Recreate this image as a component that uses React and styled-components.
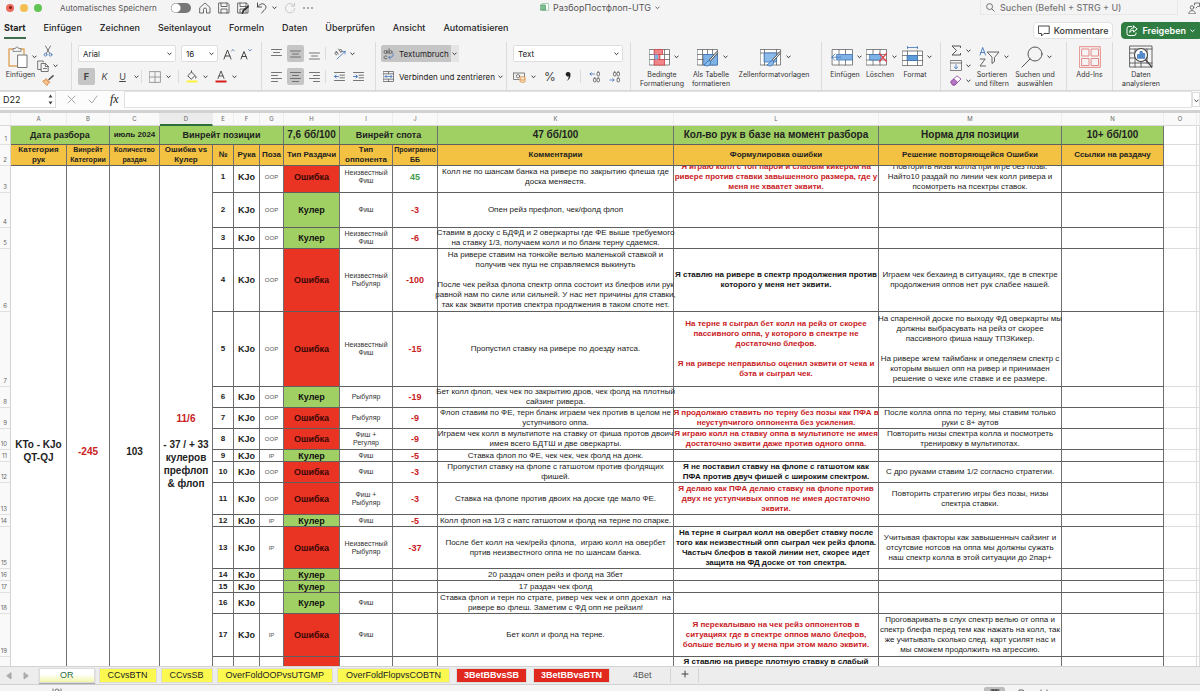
import React, { useLayoutEffect, useRef } from "react";
import styled, { createGlobalStyle, css } from "styled-components";

const GREEN = "#a0cf63";
const AMBER = "#f3c243";
const RED = "#e93323";
const INK_RED = "#c9211e";
const UI = `Inter, "Noto Sans", sans-serif`;
const CELL = `"Liberation Sans", Arial, sans-serif`;

const Global = createGlobalStyle`
  *, *::before, *::after { box-sizing: border-box; }
  html, body { margin: 0; height: 100%; background: #f5f4f5; }
  #root { height: 100%; }
  button, select, input { font: inherit; color: inherit; margin: 0; padding: 0; border: 0; background: none; }
`;

const Window = styled.div`
  display: flex;
  flex-direction: column;
  height: 100vh;
  overflow: hidden;
  font-family: ${UI};
  font-size: 8px;
  color: #222;
`;

/* ---------- title bar ---------- */
const TitleBar = styled.header`
  display: grid;
  grid-template-columns: 1fr auto 1fr;
  align-items: center;
  height: 15px;
  flex: none;
`;
const TitleSide = styled.div`
  display: flex;
  align-items: center;
  gap: ${(p) => p.$gap || 0}px;
  justify-content: ${(p) => (p.$end ? "flex-end" : "flex-start")};
`;
const Lights = styled.div`
  display: flex;
  gap: 6px;
  padding: 0 18px 0 6px;
`;
const Light = styled.span`
  width: 8px;
  height: 8px;
  border-radius: 50%;
  background: ${(p) => p.$color};
  display: grid;
  place-items: center;
  &::after {
    content: "";
    width: 3px;
    height: 3px;
    border-radius: 50%;
    background: ${(p) => p.$dot || "transparent"};
  }
`;
const AutoSave = styled.label`
  display: flex;
  align-items: center;
  gap: 14px;
  font-size: 8px;
  color: #555;
`;
const Toggle = styled.input`
  appearance: none;
  width: 20px;
  height: 10px;
  border-radius: 5px;
  background: radial-gradient(circle at 5px 5px, #fff 4px, #777 5px);
`;
const Quick = styled.div`
  display: flex;
  align-items: center;
  gap: 7px;
  padding-left: 8px;
`;
const IconButton = styled.button`
  display: flex;
  align-items: center;
  justify-content: center;
  flex: none;
  color: ${(p) => p.$color || "#4a4a4a"};
  gap: ${(p) => p.$gap || 0}px;
`;
const DocName = styled.h1`
  display: flex;
  align-items: center;
  gap: 4px;
  margin: 0;
  font-size: 9px;
  font-weight: 400;
  color: #555;
`;
const SearchBox = styled.label`
  display: flex;
  align-items: center;
  gap: 5px;
  width: 198px;
  height: 15px;
  padding-left: 5px;
  border: 1px solid #e9e8e9;
  border-top: 0;
  color: #666;
  input {
    flex: 1;
    min-width: 0;
    font-size: 9px;
    font-weight: 500;
  }
  input::placeholder { color: #777; opacity: 1; }
`;

/* ---------- ribbon tabs ---------- */
const TabBar = styled.nav`
  display: flex;
  align-items: center;
  gap: 18px;
  height: 27px;
  flex: none;
  padding-left: 4px;
`;
const RibbonTab = styled.a`
  font-size: 9px;
  line-height: 18px;
  font-weight: ${(p) => (p.$active ? 700 : 500)};
  color: #262626;
  text-decoration: none;
  border-bottom: 2px solid ${(p) => (p.$active ? "#3f6b4f" : "transparent")};
`;
const TabActions = styled.div`
  display: flex;
  gap: 8px;
  margin-left: auto;
  padding-top: 4px;
`;
const Action = styled.button`
  display: flex;
  align-items: center;
  gap: 4px;
  height: 17px;
  padding: 0 4px;
  font-size: 9px;
  font-weight: ${(p) => (p.$primary ? 600 : 500)};
  border-radius: ${(p) => (p.$primary ? "4px 0 0 4px" : "4px")};
  background: ${(p) => (p.$primary ? "#2f7d43" : "#fff")};
  color: ${(p) => (p.$primary ? "#fff" : "#333")};
  border: 1px solid ${(p) => (p.$primary ? "#2f7d43" : "#e2e2e2")};
`;

/* ---------- ribbon ---------- */
const Ribbon = styled.div`
  display: flex;
  height: 49px;
  flex: none;
  border-bottom: 1px solid #d9d8d9;
`;
const Group = styled.section`
  width: ${(p) => p.$w}px;
  flex: none;
  display: flex;
  padding: 3px 0 0 ${(p) => p.$pad || 6}px;
  border-left: ${(p) => (p.$first ? "0" : "1px solid #dddcdd")};
  gap: ${(p) => p.$gap || 0}px;
`;
const Stack = styled.div`
  display: flex;
  flex-direction: column;
  gap: ${(p) => (p.$gap === undefined ? 6 : p.$gap)}px;
`;
const Line = styled.div`
  display: flex;
  align-items: center;
  height: 17px;
  gap: ${(p) => p.$gap || 0}px;
`;
const Divider = styled.span`
  width: 1px;
  height: 13px;
  background: #dcdcdc;
`;
const SelectWrap = styled.span`
  display: flex;
  align-items: center;
  width: ${(p) => p.$w}px;
  height: 17px;
  padding-right: 3px;
  background: #fff;
  border: 1px solid #dedede;
  border-radius: 2px;
  select {
    appearance: none;
    flex: 1;
    min-width: 0;
    padding-left: 4px;
    font-size: 8px;
    outline: 0;
  }
`;
const Square = styled.button`
  width: 17px;
  height: 17px;
  display: grid;
  place-items: center;
  flex: none;
  border-radius: 2px;
  font-size: 9px;
  font-weight: ${(p) => p.$weight || 400};
  font-style: ${(p) => (p.$italic ? "italic" : "normal")};
  text-decoration: ${(p) => (p.$underline ? "underline" : "none")};
  background: ${(p) => (p.$on ? "#c6c5c6" : "transparent")};
  color: #444;
`;
const Glyph = styled.button`
  font-size: ${(p) => p.$size}px;
  line-height: 17px;
  color: #444;
`;
const WrapButton = styled.button`
  display: flex;
  align-items: center;
  gap: 5px;
  height: 17px;
  padding: 0 2px;
  font-size: 8px;
  border-radius: 2px 0 0 2px;
  background: ${(p) => (p.$on ? "#c6c5c6" : "transparent")};
`;
const ChevronSlot = styled.button`
  width: 8px;
  height: 17px;
  display: grid;
  place-items: center;
  background: ${(p) => (p.$on ? "#e6e5e6" : "transparent")};
`;
const BigButton = styled.button`
  width: ${(p) => p.$w}px;
  flex: none;
  display: flex;
  flex-direction: column;
  align-items: center;
  align-self: flex-start;
  gap: 2px;
  font-size: 7px;
  line-height: 9px;
  white-space: pre;
  color: #333;
`;
const BigIcon = styled.span`
  display: flex;
  align-items: center;
  gap: 4px;
  height: 23px;
  padding-left: ${(p) => (p.$solo ? 0 : 3)}px;
`;

/* ---------- formula bar ---------- */
const FormulaBar = styled.div`
  display: flex;
  align-items: center;
  height: 22px;
  flex: none;
  padding: 1px 0 3px;
  background: #fcfcfc;
  border-bottom: 3px solid #d3d2d3;
`;
const NameBox = styled.label`
  display: flex;
  align-items: center;
  width: 56px;
  height: 17px;
  padding: 0 2px 0 3px;
  background: #fff;
  border: solid #dcdcdc;
  border-width: 1px 1px 1px 0;
  input { flex: 1; min-width: 0; font-size: 9px; }
`;
const FormulaTools = styled.div`
  display: flex;
  align-items: center;
  gap: 12px;
  padding: 0 5px 0 11px;
`;
const Fx = styled.button`
  font: italic 12px "Liberation Serif", serif;
  color: #222;
`;
const FormulaInput = styled.input`
  flex: 1;
  min-width: 0;
  height: 17px;
  background: #fff;
  border: 1px solid #e2e2e2;
`;
const Expand = styled.button`
  width: 8px;
  height: 15px;
  background: #fff;
  border: 1px solid #ddd;
  overflow: hidden;
`;

/* ---------- sheet ---------- */
const Sheet = styled.main`
  flex: 1;
  min-height: 0;
  display: flex;
  flex-direction: column;
  background: #fff;
  overflow: hidden;
`;
const Pane = styled.div`
  flex: ${(p) => (p.$body ? "1" : "none")};
  min-height: 0;
  overflow: hidden;
`;
const Grid = styled.table`
  table-layout: fixed;
  width: 100%;
  border-collapse: separate;
  border-spacing: 0;
  font-family: ${CELL};
`;
const Row = styled.tr`
  height: ${(p) => p.$h}px;
`;
const ColHead = styled.th`
  padding: 0;
  font: 400 6px/10px ${UI};
  color: #666;
  background: ${(p) => (p.$on ? "#ebebeb" : "#f9f9fa")};
  border-right: 1px solid #ededed;
  border-bottom: ${(p) => (p.$on ? "2px solid #2c6e3c" : "1px solid #d8d8d8")};
`;
const RowHead = styled.th`
  padding: 0 3px 1px 0;
  vertical-align: bottom;
  text-align: right;
  direction: rtl;
  font: 400 6px/8px ${UI};
  color: #666;
  background: #f9f9fa;
  border-right: 1px solid #d4d4d4;
  border-bottom: 1px solid #e0e0e0;
  overflow: hidden;
`;
const kinds = {
  title: css`font-weight: 700; font-size: ${(p) => p.$size || 9}px; line-height: 12px; background: ${GREEN};`,
  head: css`font-weight: 700; font-size: ${(p) => p.$size || 8}px; line-height: 10px; background: ${AMBER};`,
  num: css`font-weight: 700; font-size: 8px; line-height: 10px;`,
  hand: css`font-weight: 700; font-size: 9px; line-height: 10px;`,
  pos: css`font-size: 6px; line-height: 8px; color: #555;`,
  type: css`font-weight: 700; font-size: 9px; line-height: 10px;`,
  opp: css`font-size: 7px; line-height: 8px; color: #333;`,
  sum: css`font-weight: 700; font-size: 9px; line-height: 10px;`,
  note: css`font-size: 8px; line-height: 10px; color: #222;`,
  error: css`font-weight: 700; font-size: 8px; line-height: 10px;`,
  merged: css`font-weight: 700; font-size: 10px; line-height: 13px; border-bottom: 0;`,
};
const Cell = styled.td`
  padding: 0;
  text-align: center;
  vertical-align: ${(p) => (p.$top ? "top" : "middle")};
  white-space: pre;
  border-right: 1px solid #6f6f6f;
  border-bottom: 1px solid #5f5f5f;
  ${(p) => kinds[p.$kind]}
  ${(p) => p.$color && `color: ${p.$color};`}
  ${(p) => p.$bg && `background: ${p.$bg};`}
`;
const Ink = styled.span`
  color: ${(p) => p.$color};
`;
const Centered = styled.div`
  display: flex;
  justify-content: center;
`;
const Blank = styled.td`
  padding: 0;
  border-right: 1px solid #dcdcdc;
  border-bottom: 1px solid #dcdcdc;
`;

/* ---------- bottom ---------- */
const SheetTabs = styled.nav`
  display: flex;
  align-items: center;
  height: 19px;
  flex: none;
  padding-left: 6px;
  background: #ededed;
  border-top: 1px solid #d2d2d2;
  border-bottom: 1px solid #d0d0d0;
`;
const TabArrows = styled.div`
  display: flex;
  gap: 11px;
  width: 33px;
`;
const SheetTab = styled.button`
  height: 15px;
  padding: 0 ${(p) => p.$pad}px;
  margin-right: 4px;
  font: 400 9px/13px ${CELL};
  color: #222;
  border: 1px solid #dcdcdc;
  background: ${(p) => p.$bg || "transparent"};
  ${(p) => p.$active && css`
    color: #2a7040;
    background: linear-gradient(#fff 40%, #f2f7a8);
    box-shadow: 0 1px 1px #aaa;
  `}
  ${(p) => p.$bold && css`
    font-weight: 700;
    color: #fff;
    margin-left: 2px;
  `}
  ${(p) => p.$plain && css`color: #555; border-color: transparent #d4d4d4 transparent transparent; margin: 0;`}
`;
const StatusBar = styled.footer`
  display: flex;
  justify-content: space-between;
  height: 6px;
  flex: none;
  padding: 2px 0 0 52px;
  background: #f4f4f4;
  overflow: hidden;
`;
const ViewButtons = styled.div`
  display: flex;
  gap: 12px;
  padding-right: 151px;
`;
const ViewButton = styled.button`
  display: grid;
  place-items: start center;
  width: ${(p) => (p.$on ? 21 : 10)}px;
  height: 8px;
  padding-top: 2px;
  border-radius: 2px;
  background: ${(p) => (p.$on ? "#bdbdbd" : "transparent")};
`;

/* ---------- icons ---------- */
const Svg = ({ w, h, children, sw = 1, color = "currentColor" }) => (
  <svg width={w} height={h} viewBox={`0 0 ${w} ${h}`} fill="none" stroke={color} strokeWidth={sw} strokeLinecap="round" strokeLinejoin="round" aria-hidden="true">
    {children}
  </svg>
);
const Chevron = ({ color = "#333" }) => (
  <Svg w={5} h={4} color={color}><path d="M.8 1l1.7 1.7L4.2 1" /></Svg>
);
const Drop = ({ label }) => <ChevronSlot aria-label={label}><Chevron /></ChevronSlot>;

const Home = () => <Svg w={12} h={12} sw={0.8}><path d="M1 5.500L6 1l5 4.500V11H7.500V7.500a1.500 1.500 0 0 0-3 0V11H1z" /></Svg>;
const Save = ({ pen }) => (
  <Svg w={12} h={12} sw={0.8}>
    <path d="M1 1h8.500L11 2.500V11H1zM3 1v3.500h6V1M3 11V7h6v4" />
    {pen && <path d="M5.500 11l1-2.500L11 4.500" stroke="#333" strokeWidth="2" />}
  </Svg>
);
const Undo = () => <Svg w={11} h={12}><path d="M1.500 1v4h4M1.500 5C4 1.500 7 1 9 3s.5 4-1 5.500L5.500 11" /></Svg>;
const Redo = () => <Svg w={12} h={12}><path d="M10.500 1v3h-3M10.300 4A4.700 4.700 0 1 0 10.800 6.500" /></Svg>;
const Magnifier = ({ s = 9, sw = 0.9 }) => (
  <svg width={s} height={s} viewBox="0 0 10 10" fill="none" stroke="#555" strokeWidth={sw} aria-hidden="true"><circle cx="4" cy="4" r="3.300" /><path d="M6.500 6.500L9.500 9.500" /></svg>
);
const SearchBig = () => <Svg w={22} h={22} color="#555"><circle cx="14" cy="8" r="7" /><path d="M9 13l-8 8" /></Svg>;
const Clipboard = () => (
  <Svg w={20} h={22}>
    <path d="M9 20H1V3h4M13 3h3v5" stroke="#e0a55c" strokeWidth="1.400" />
    <path d="M5 5V2.500h2.500a1.500 1.500 0 0 1 3 0H13V5z" stroke="#777" strokeWidth=".8" />
    <path d="M10 9h9v12.500h-9z" stroke="#666" fill="#fff" strokeWidth=".9" />
  </Svg>
);
const Scissors = () => (
  <Svg w={10} h={12} sw={0.8}>
    <path d="M2.500 1l4.300 7.500M7.500 1L3.200 8.500" stroke="#555" /><circle cx="2.500" cy="9.700" r="1.400" stroke="#3c74b8" /><circle cx="7.500" cy="9.700" r="1.400" stroke="#3c74b8" />
  </Svg>
);
const Copy = () => <Svg w={12} h={12} sw={0.8} color="#555"><path d="M4 9.500H.7V1h5.500v1M4.500 3.500h4l2.700 2.700V11.500H4.500zM8.300 3.500v3h3M6.500 8.500h3" /></Svg>;
const Brush = () => <Svg w={12} h={11} sw={0.9}><path d="M11 .8L7 4.500" stroke="#555" strokeWidth="1.600" /><path d="M4 3.500l4 4M1 6l3-1.500 3 3L5 10.300z" stroke="#d78532" fill="#f4c391" /></Svg>;
const FontSize = ({ up }) => (
  <Svg w={12} h={12} color="#444"><path d={up ? "M1 11l3.500-9L8 11M2.200 8h4.600" : "M1 11l3-7.500L7 11M2 8.500h4"} /><path d={up ? "M8.500 3L10 1.500 11.500 3" : "M8.500 1.500L10 3l1.500-1.500"} stroke="#3c74b8" strokeWidth=".8" /></Svg>
);
const Borders = () => <Svg w={12} h={12} sw={0.8} color="#888"><path d="M.6.6h10.800v10.800H.6zM6 .6v10.800M.6 6h10.800" /></Svg>;
const Fill = () => <Svg w={12} h={13} sw={0.9}><path d="M2 5.500L5.500 2l3.500 3.500L5.500 9zM5.500 2V.8M9.500 6c1 1.500 1 2-.1 2" stroke="#444" /><path d="M.5 11.500h11" stroke="#fbf23c" strokeWidth="2" strokeLinecap="butt" /></Svg>;
const FontColor = () => <Svg w={12} h={13} sw={0.9}><path d="M3 8.500L6 1l3 7.500M4 6h4" stroke="#444" /><path d="M.5 11.500h11" stroke="#d5211b" strokeWidth="2" strokeLinecap="butt" /></Svg>;
const lineSets = {
  top: ["M.5 1.500h10", "M2.500 4.500h6", "M.5 7.500h10"],
  middle: ["M.5 3h10", "M2.500 6h6", "M.5 9h10"],
  bottom: ["M.5 5h10", "M2.500 8h6", "M.5 11h10"],
  left: ["M.5 1.500h10", "M.5 4.500h6", "M.5 7.500h10", "M.5 10.500h6"],
  center: ["M.5 1.500h10", "M2.500 4.500h6", "M.5 7.500h10", "M2.500 10.500h6"],
  right: ["M.5 1.500h10", "M4.500 4.500h6", "M.5 7.500h10", "M4.500 10.500h6"],
};
const Lines = ({ kind }) => <Svg w={11} h={12} sw={0.9} color="#666">{lineSets[kind].map((d) => <path key={d} d={d} />)}</Svg>;
const Orient = () => <Svg w={12} h={12} sw={0.8}><path d="M3 11l8-7.500M11 3.500H8.500M11 3.500V6" stroke="#3c74b8" /><path d="M2.800 6.800a1.400 1.400 0 1 1 .9-1.900M4.200 6.200L2 3.200M4.500 1l2.300 3.300M6.800 4.300a1.400 1.400 0 1 0-1.500-1.800" stroke="#555" /></Svg>;
const Indent = ({ right }) => <Svg w={11} h={11} sw={0.9}><path d="M.5 1.500h10M6 4.200h4.500M6 6.800h4.500M.5 9.500h10" stroke="#666" /><path d={right ? "M.5 5.500h3.800M3 4l1.500 1.500L3 7" : "M4.500 5.500H.7M2.200 4L.7 5.500 2.200 7"} stroke="#3c74b8" /></Svg>;
const WrapIcon = () => <Svg w={11} h={12} sw={0.8} color="#555"><circle cx="2.500" cy="4" r="1.500" /><path d="M4 2.500v3M6 .8v4.700" /><circle cx="7.500" cy="4" r="1.500" /><path d="M4 8.200C2 7.200 1 8.500 1 9.500s1.500 2 3 1" /><path d="M10 5.500c.8 3-1 4-4 4M7.300 8L5.800 9.500 7.300 11" stroke="#3c74b8" /></Svg>;
const Merge = () => <Svg w={11} h={11} sw={0.8}><path d="M.5.500h10v10H.5zM.5 2.800h10M.5 8.200h10M5.500.500v2.300M5.500 8.200v2.300" stroke="#666" /><path d="M2 5.500h7M3.500 4L2 5.500 3.500 7M7.500 4L9 5.500 7.500 7" stroke="#3c74b8" /></Svg>;
const Currency = () => <Svg w={13} h={12} sw={0.8}><path d="M.5 2h11v5M.5 2v6.500h5.500" stroke="#666" /><circle cx="5" cy="5.200" r="1.700" stroke="#666" /><path d="M7 6.500c0-1.200 5-1.200 5 0v4c0 1.200-5 1.200-5 0zM7 8.500c0 1 5 1 5 0" stroke="#d78532" fill="#fae2c8" /></Svg>;
const Decimals = ({ less }) => (
  <Svg w={12} h={12} sw={0.8} color="#555">
    <rect x="8" y="1" width="2.500" height="4" rx="1.200" />{less && <rect x="4.500" y="1" width="2.500" height="4" rx="1.200" />}
    <rect x="8" y="7" width="2.500" height="4" rx="1.200" />{!less && <rect x="4.500" y="7" width="2.500" height="4" rx="1.200" />}
    <path d={less ? "M1 9h4M3.700 7.700L5 9 3.700 10.300" : "M5.500 3H1M2.300 1.700L1 3l1.300 1.300"} stroke="#3c74b8" />
  </Svg>
);
const GridPath = "M.5 3.500h20v15.500H.5zM.5 8.500h20M.5 13.500h20M5.500 3.500v15.500M10.500 3.500v15.500M15.500 3.500v15.500";
const CondIcon = () => <Svg w={21} h={22} sw={0.8}><path d={GridPath} stroke="#666" fill="#fff" /><path d="M5.500 3.500h8v5h-8zM10.500 8.500h-5v5h5zM5.500 13.500h10V19h-10z" fill="#f0868a" stroke="#d9484d" /><path d="M5.500 8.500h3.500v5H5.500z" fill="#7fb2e5" stroke="none" /></Svg>;
const Pen = () => <><path d="M20 6.500L12.500 15" stroke="#555" strokeWidth="2.400" /><path d="M20 6.500L12.500 15" stroke="#fff" strokeWidth="1" /><path d="M12.500 14.500c-3 0-3 3.500-5.500 4.500 3.500 2 7 .5 6.500-3z" fill="#8dbcec" stroke="#2f6fb5" /></>;
const TableIcon = () => <Svg w={22} h={22} sw={0.8}><path d={GridPath} stroke="#666" fill="#fff" /><path d="M7 8.500h13.500V19H7z" fill="#7fb2e5" stroke="#3c74b8" /><Pen /></Svg>;
const StyleIcon = () => <Svg w={22} h={22} sw={0.8}><path d="M.5 3.500h20v15.500H.5zM.5 7h20M4.500 3.500v15.500M16.500 3.500v15.500" stroke="#666" fill="#fff" /><path d="M4.500 7h12v9h-12z" fill="#8dbcec" stroke="#3c74b8" /><Pen /></Svg>;
const InsertCells = () => <Svg w={22} h={22} sw={0.8}><path d="M1.500 3.500h20v15.500h-20zM8 3.500v15.500M14.500 3.500v15.500" stroke="#666" fill="#fff" /><path d="M6 8.500h15.500v5.500H6z" fill="#7fb2e5" stroke="#3c74b8" /><path d="M10 11.200H.8M4 8l-3.200 3.200L4 14.500" stroke="#3c74b8" /></Svg>;
const DeleteCells = () => <Svg w={22} h={22} sw={0.8}><path d="M.5 3.500h20v15.500H.5zM7 3.500v15.500M14 3.500v15.500M.5 8.500h20M.5 14h20" stroke="#666" fill="#fff" /><path d="M4 8.500h11v5.500H4z" fill="#7fb2e5" stroke="#3c74b8" /><path d="M13.500 7.500l7 8M20.500 7.500l-7 8" stroke="#e0454a" strokeWidth="1.200" /></Svg>;
const FormatCells = () => <Svg w={21} h={22} sw={0.8}><path d="M.5 5h20v14.500H.5zM.5 9.500h20M.5 14.500h20M5.500 5v14.500M15.500 5v14.500" stroke="#666" fill="#fff" /><path d="M5.500 9.500h10v5h-10z" fill="#5b9bd9" stroke="#3c74b8" /><path d="M5.500 1.500h10M5.500.5v2M15.500.5v2" stroke="#3c74b8" /></Svg>;
const Sigma = () => <Svg w={11} h={11} sw={0.9} color="#444"><path d="M9.500 2.500V1H1l4.500 4.500L1 10h8.500V8.500" /></Svg>;
const FillDown = () => <Svg w={12} h={11} sw={0.8}><path d="M.5.500h11v10H.5zM.5 3h11" stroke="#666" /><path d="M6 4.500v4M4.200 7L6 8.700 7.800 7" stroke="#3c74b8" /></Svg>;
const Eraser = () => <Svg w={12} h={11} sw={0.8}><path d="M1 6.500L7 .8l4 3.200-6 6H3z" stroke="#8a3fa0" fill="#fff" /><path d="M1 6.500L3.800 4l4 3.300L5 10H3z" fill="#b676c6" stroke="#8a3fa0" /></Svg>;
const SortFilter = () => <Svg w={21} h={22} sw={0.9}><path d="M1 9l2.700-7.500L6.500 9M2 6.500h3.500" stroke="#3c74b8" /><path d="M1.200 13h5L1 20h5.500" stroke="#555" /><path d="M8.500 6h11.500l-4.500 5.500v4L13 17.500v-6z" stroke="#555" /></Svg>;
const AddIns = () => <Svg w={22} h={22} sw={1} color="#e58a86"><path d="M.7.700h20.600v20.600H.7zM3 3h7v7H3zM12.500 3h7v7h-7zM3 12.500h7v7H3zM12.500 12.500h7v7h-7z" /></Svg>;
const Analyze = () => <Svg w={24} h={23} sw={0.8} color="#444"><path d="M1 1h22v21H1zM1 4h22M1 8h4M1 13h4M1 18h22M6 4v18M12 17v5M18 4v14" /><circle cx="12" cy="10" r="6.500" fill="#fff" strokeWidth="1.100" /><path d="M8.500 13V9.500h2V13zM11 13V6.500h2.200V13zM13.700 13V8.500h2V13z" fill="#5b9bd9" stroke="#3c74b8" /><path d="M16.800 15l6 7" strokeWidth="1.200" /></Svg>;
const Bubble = () => <Svg w={12} h={12} sw={0.9}><path d="M.8 1h10.400v7.500H6L3.500 11V8.500H.8z" /></Svg>;
const ShareIcon = () => <Svg w={12} h={12} sw={1}><path d="M5.500 1.500H3A2 2 0 0 0 1 3.500v5a2 2 0 0 0 2 2h5a2 2 0 0 0 2-2V8M7.500 1l3.700 3-3.700 3V5.200C5.500 5.200 4.500 6 3.800 7.500 3.800 5 5 3 7.500 2.800z" /></Svg>;
const People = () => <Svg w={12} h={12} sw={0.9} color="#666"><circle cx="4" cy="5.500" r="1.800" /><path d="M.8 11.500c0-4 6.500-4 6.500 0zM6.500 3V1h5v3.500H9.500L8 6" /></Svg>;
const FileIcon = () => <Svg w={9} h={9} sw={0.8}><path d="M2.500.500h6v7h-6z" stroke="#9bc4a6" fill="#fff" /><path d="M.5 2h5v5h-5z" stroke="#57a06c" fill="#7fbf92" /></Svg>;

/* ---------- data ---------- */
const widths = [11, 56, 43, 50, 53, 21, 26, 24, 56, 53, 45, 236, 205, 183, 102, 33, null];
const letters = ["", "A", "B", "C", "D", "E", "F", "G", "H", "I", "J", "K", "L", "M", "N", "O", ""];

const E = "Ошибка";
const K = "Кулер";
const rows = [
  { r: 3, h: 32, n: 1, pos: "OOP", type: E, opp: "Неизвестный\nФиш", sum: "45",
    note: "Колл не по шансам банка на ривере по закрытию флеша где\nдоска меняестя.",
    err: "Я играю колл с топ парой и слабым кикером на\nривере против ставки завышенного размера, где у\nменя не хваатет эквити.", red: true,
    fix: "Повторить низы колла при игре без позы.\nНайто10 раздай по линии чек колл ривера и\nпсомотреть на псектры ставок." },
  { r: 4, h: 35, n: 2, pos: "OOP", type: K, opp: "Фиш", sum: "-3", note: "Опен рейз префлоп, чек/фолд флоп" },
  { r: 5, h: 21, n: 3, pos: "OOP", type: K, opp: "Неизвестный\nФиш", sum: "-6",
    note: "Ставим в доску с БДФД и 2 оверкарты где ФЕ выше требуемого\nна ставку 1/3, получаем колл и по бланк терну сдаемся." },
  { r: 6, h: 63, n: 4, pos: "OOP", type: E, opp: "Неизвестный\nРыбуляр", sum: "-100",
    note: "На ривере ставим на тонкойе велью маленькой ставкой и\nполучив чек пуш не справляемся выкинуть\n\nПосле чек рейза флопа спектр оппа состоит из блефов или рук\nравной нам по силе или сильней. У нас нет причины для ставки,\nтак как эквити против спектра продлжения в таком споте нет.",
    err: "Я ставлю на ривере в спектр продолжения против\nкоторого у меня нет эквити.",
    fix: "Играем чек бехаинд в ситуациях, где в спектре\nпродолжения оппов нет рук слабее нашей." },
  { r: 7, h: 75, n: 5, pos: "OOP", type: E, opp: "Неизвестный\nФиш", sum: "-15", note: "Пропустил ставку на ривере по доезду натса.",
    err: "На терне я сыграл бет колл на рейз от скорее\nпассивного оппа, у которого в спектре не\nдостаточно блефов.\n\nЯ на ривере неправильо оценил эквити от чека и\nбэта и сыграл чек.", red: true,
    fix: "На спаренной доске по выходу ФД оверкарты мы\nдолжны выбрасувать на рейз от скорее\nпассивного фиша нашу ТПЗКикер.\n\nНа ривере жгем таймбанк и опеделяем спектр с\nкоторым вышел опп на ривер и принимаен\nрешение о чеке иле ставке и ее размере." },
  { r: 8, h: 21, n: 6, pos: "OOP", type: K, opp: "Рыбуляр", sum: "-19", note: "Бет колл флоп, чек чек по закрытию дров, чек фолд на плотный\nсайзинг ривера." },
  { r: 9, h: 21, n: 7, pos: "OOP", type: E, opp: "Рыбуляр", sum: "-9", note: "Флоп ставим по ФЕ, терн бланк играем чек против в целом не\nуступчивого оппа.",
    err: "Я продолжаю ставить по терну без позы как ПФА в\nнеуступчигого оппонента без усиления.", red: true,
    fix: "После колла оппа по терну, мы ставим только\nруки с 8+ аутов" },
  { r: 10, h: 21, n: 8, pos: "OOP", type: E, opp: "Фиш +\nРегуляр", sum: "-9", note: "Играем чек колл в мультипоте на ставку от фиша протов двоич\nимея всего БДТШ и две оверкарты.",
    err: "Я играю колл на ставку оппа в мультипоте не имея\nдостаточно эквити даже против одного оппа.", red: true,
    fix: "Повторить низы спектра колла и посмотреть\nтренировку в мультипотах." },
  { r: 11, h: 12, n: 9, pos: "IP", type: K, opp: "Фиш", sum: "-5", note: "Ставка флоп по ФЕ, чек чек, чек фолд на донк." },
  { r: 12, h: 21, n: 10, pos: "OOP", type: E, opp: "Фиш", sum: "-3", note: "Пропустил ставку на флопе с гатшотом против фолдящих\nфишей.",
    err: "Я не поставил ставку на флопе с гатшотом как\nПФА против двуч фишей с широким спектром.",
    fix: "С дро руками ставим 1/2 согласно стратегии." },
  { r: 13, h: 32, n: 11, pos: "OOP", type: E, opp: "Фиш +\nРыбуляр", sum: "-3", note: "Ставка на флопе против двоих на доске где мало ФЕ.",
    err: "Я делаю как ПФА делаю ставку на флопе против\nдвух не уступчивых оппов не имея достаточно\nэквити.", red: true,
    fix: "Повторить стратегию игры без позы, низы\nспектра ставки." },
  { r: 14, h: 12, n: 12, pos: "IP", type: K, opp: "Фиш", sum: "-5", note: "Колл флоп на 1/3 с натс гатшотом и фолд на терне по спарке." },
  { r: 15, h: 42, n: 13, pos: "IP", type: E, opp: "Неизвестный\nРыбуляр", sum: "-37", note: "После бет колл на чек/рейз флопа,  играю колл на овербет\nпртив неизвестного оппа не по шансам банка.",
    err: "На терне я сыграл колл на овербет ставку после\nтого как неизвестный опп сыграл чек рейз флопа.\nЧастыч блефов в такой линии нет, скорее идет\nзащита на ФД доске от топ спектра.",
    fix: "Учитывая факторы как завышенныч сайзинг и\nотсутсвие нотсов на оппа мы должны сужать\nнаш спектр колла в этой ситуации до 2пар+" },
  { r: 16, h: 12, n: 14, type: K, note: "20 раздач опен рейз и фолд на 3бет" },
  { r: 17, h: 12, n: 15, type: K, note: "17 раздач чек фолд" },
  { r: 18, h: 21, n: 16, type: K, opp: "Фиш", note: "Ставка флоп и терн по страте, ривер чек чек и опп доехал  на\nривере во флеш. Заметим с ФД опп не рейзил!" },
  { r: 19, h: 43, n: 17, pos: "IP", type: E, opp: "Фиш", note: "Бет колл и фолд на терне.",
    err: "Я перекалываю на чек рейз оппонентов в\nситуациях где в спектре оппов мало блефов,\nбольше велью и у мена при этом мало эквити.", red: true,
    fix: "Проговаривать в слух спектр велью от оппа и\nспектр блефа перед тем как нажать на колл, так\nже учитывать сколько след. карт усилят нас и\nмы сможем продолжить на агрессию." },
  { r: "", h: 84, type: "", err: "Я ставлю на ривере плотную ставку в слабый", top: true },
];

const Cols = () => (
  <colgroup>{widths.map((w, i) => <col key={i} style={w ? { width: w } : undefined} />)}</colgroup>
);

/* Lines longer than the column spill equally to both sides */
const Text = ({ children }) => <Centered><span>{children}</span></Centered>;

function Frozen() {
  const t = (children, span, size) => <Cell as="th" $kind="title" colSpan={span} $size={size}><Text>{children}</Text></Cell>;
  const h = (children, size) => <Cell as="th" $kind="head" $size={size}><Text>{children}</Text></Cell>;
  return (
    <Grid>
      <Cols />
      <thead>
        <Row $h={13}>{letters.map((l, i) => <ColHead key={i} $on={l === "D"}>{l}</ColHead>)}</Row>
        <Row $h={19}>
          <RowHead>1</RowHead>
          {t("Дата разбора", 2)}{t("июль 2024", 1, 8)}{t("Винрейт позиции", 4)}{t("7,6 бб/100", 1, 10)}
          {t("Винрейт спота", 2)}{t("47 бб/100", 1, 10)}{t("Кол-во рук в базе на момент разбора", 1, 10)}
          {t("Норма для позиции", 1, 10)}{t("10+ бб/100", 1, 10)}
          <Blank /><Blank />
        </Row>
        <Row $h={21}>
          <RowHead>2</RowHead>
          {h("Категория\nрук")}{h("Винрейт\nКатегории", 7)}{h("Количество\nраздач", 7)}{h("Ошибка vs\nКулер")}
          {h("№")}{h("Рука")}{h("Поза")}{h("Тип Раздачи")}{h("Тип\nоппонента")}{h("Проигранно\nББ", 7)}
          {h("Комментарии")}{h("Формулировка ошибки")}{h("Решение повторяющейся Ошибки")}{h("Ссылки на раздачу")}
          <Blank /><Blank />
        </Row>
      </thead>
    </Grid>
  );
}

function Body() {
  const pane = useRef(null);
  useLayoutEffect(() => { pane.current.scrollTop = 5; }, []);
  const span = rows.length;
  return (
    <Pane $body ref={pane}>
      <Grid>
        <Cols />
        <tbody>
          {rows.map((d, i) => (
            <Row key={i} $h={d.h}>
              <RowHead>{d.r}</RowHead>
              {i === 0 && (
                <>
                  <Cell $kind="merged" rowSpan={span}>{"KTo - KJo\nQT-QJ"}</Cell>
                  <Cell $kind="merged" rowSpan={span} $color={INK_RED}>-245</Cell>
                  <Cell $kind="merged" rowSpan={span}>103</Cell>
                  <Cell $kind="merged" rowSpan={span}><Ink $color={INK_RED}>11/6</Ink>{"\n\n- 37 / + 33\nкулеров\nпрефлоп\n& флоп"}</Cell>
                </>
              )}
              <Cell $kind="num">{d.n}</Cell>
              <Cell $kind="hand">{d.n && "KJo"}</Cell>
              <Cell $kind="pos">{d.pos}</Cell>
              <Cell $kind="type" $bg={d.type === K ? GREEN : RED} $color={d.type === K ? "#111" : "#3a0805"}>{d.type}</Cell>
              <Cell $kind="opp">{d.opp}</Cell>
              <Cell $kind="sum" $color={d.sum === "45" ? "#3f9c4c" : INK_RED}>{d.sum}</Cell>
              <Cell $kind="note"><Text>{d.note}</Text></Cell>
              <Cell $kind="error" $top={d.top} $color={d.red ? INK_RED : "#111"}><Text>{d.err}</Text></Cell>
              <Cell $kind="note"><Text>{d.fix}</Text></Cell>
              <Cell $kind="note" />
              <Blank /><Blank />
            </Row>
          ))}
        </tbody>
      </Grid>
    </Pane>
  );
}

const Big = ({ w, icon, label, solo }) => (
  <BigButton $w={w}><BigIcon $solo={solo}>{icon}{!solo && <Chevron />}</BigIcon>{label}</BigButton>
);
const Picker = ({ w, label, value }) => (
  <SelectWrap $w={w}>
    <select aria-label={label} defaultValue={value}><option>{value}</option></select>
    <Chevron />
  </SelectWrap>
);

const menu = ["Start", "Einfügen", "Zeichnen", "Seitenlayout", "Formeln", "Daten", "Überprüfen", "Ansicht", "Automatisieren"];

export default function App() {
  return (
    <Window>
      <Global />
      <TitleBar>
        <TitleSide>
          <Lights><Light $color="#ec6a5e" $dot="#7d1f17" /><Light $color="#f4bf4f" /><Light $color="#61c554" /></Lights>
          <AutoSave>Automatisches Speichern<Toggle type="checkbox" role="switch" /></AutoSave>
          <Quick>
            <IconButton aria-label="Start"><Home /></IconButton>
            <IconButton aria-label="Sichern"><Save /></IconButton>
            <IconButton aria-label="Sichern unter"><Save pen /></IconButton>
            <IconButton aria-label="Rückgängig" $gap={5}><Undo /><Chevron /></IconButton>
            <IconButton aria-label="Wiederholen" $color="#c8c8c8"><Redo /></IconButton>
            <IconButton aria-label="Mehr"><Svg w={10} h={4} sw={1.6}><path d="M1 2h0M5 2h0M9 2h0" /></Svg></IconButton>
          </Quick>
        </TitleSide>
        <DocName><FileIcon />РазборПостфлоп-UTG<Chevron color="#666" /></DocName>
        <TitleSide $end $gap={10}>
          <SearchBox><Magnifier /><input type="search" aria-label="Suchen" placeholder="Suchen (Befehl + STRG + U)" /></SearchBox>
          <IconButton aria-label="Personen"><People /></IconButton>
        </TitleSide>
      </TitleBar>

      <TabBar>
        {menu.map((m, i) => <RibbonTab key={m} href="#" $active={i === 0}>{m}</RibbonTab>)}
        <TabActions>
          <Action><Bubble />Kommentare</Action>
          <Action $primary><ShareIcon />Freigeben<Chevron color="#fff" /></Action>
        </TabActions>
      </TabBar>

      <Ribbon>
        <Group $w={71} $first $pad={4}>
          <Big w={33} icon={<Clipboard />} label="Einfügen" />
          <Stack $gap={3}>
            <IconButton aria-label="Ausschneiden"><Scissors /></IconButton>
            <IconButton aria-label="Kopieren" $gap={4}><Copy /><Chevron /></IconButton>
            <IconButton aria-label="Format übertragen"><Brush /></IconButton>
          </Stack>
        </Group>
        <Group $w={190}>
          <Stack>
            <Line $gap={5}>
              <Picker w={98} label="Schriftart" value="Arial" />
              <Picker w={37} label="Schriftgrad" value="16" />
              <IconButton aria-label="Vergrößern"><FontSize up /></IconButton>
              <IconButton aria-label="Verkleinern"><FontSize /></IconButton>
            </Line>
            <Line $gap={1}>
              <Square $on $weight={700}>F</Square>
              <Square $italic>K</Square>
              <Square $underline>U</Square>
              <Drop label="Unterstreichen" />
              <Line $gap={7}>
                <Divider />
                <IconButton aria-label="Rahmen" $gap={5}><Borders /><Chevron /></IconButton>
                <Divider />
                <IconButton aria-label="Füllfarbe" $gap={5}><Fill /><Chevron /></IconButton>
                <IconButton aria-label="Schriftfarbe" $gap={5}><FontColor /><Chevron /></IconButton>
              </Line>
            </Line>
          </Stack>
        </Group>
        <Group $w={114}>
          <Stack>
            <Line $gap={2}>
              <Square aria-label="Oben"><Lines kind="top" /></Square>
              <Square $on aria-label="Mitte"><Lines kind="middle" /></Square>
              <Square aria-label="Unten"><Lines kind="bottom" /></Square>
              <Line $gap={8}><Divider /><IconButton aria-label="Ausrichtung" $gap={4}><Orient /><Chevron /></IconButton></Line>
            </Line>
            <Line $gap={2}>
              <Square aria-label="Linksbündig"><Lines kind="left" /></Square>
              <Square $on aria-label="Zentriert"><Lines kind="center" /></Square>
              <Square aria-label="Rechtsbündig"><Lines kind="right" /></Square>
              <Line $gap={8}><Divider /><IconButton aria-label="Einzug verkleinern"><Indent /></IconButton><IconButton aria-label="Einzug vergrößern"><Indent right /></IconButton></Line>
            </Line>
          </Stack>
        </Group>
        <Group $w={131} $pad={5}>
          <Stack>
            <Line><WrapButton $on><WrapIcon />Textumbruch</WrapButton><ChevronSlot $on aria-label="Umbruchoptionen"><Chevron /></ChevronSlot></Line>
            <Line><WrapButton><Merge />Verbinden und zentrieren</WrapButton><Drop label="Verbinden" /></Line>
          </Stack>
        </Group>
        <Group $w={124}>
          <Stack>
            <Line><Picker w={110} label="Zahlenformat" value="Text" /></Line>
            <Line $gap={8}>
              <IconButton aria-label="Währung" $gap={5}><Currency /><Chevron /></IconButton>
              <Glyph $size={12}>%</Glyph>
              <IconButton aria-label="Tausendertrennzeichen"><Svg w={8} h={12}><path d="M4 1a2.200 2.200 0 1 0 .8 4.200C4.700 7 4 8.500 2.500 10c3-1.500 4.200-4 4-6.500A2.400 2.400 0 0 0 4 1z" fill="#222" stroke="none" /></Svg></IconButton>
              <Divider />
              <IconButton aria-label="Dezimalstelle hinzufügen"><Decimals /></IconButton>
              <IconButton aria-label="Dezimalstelle entfernen"><Decimals less /></IconButton>
            </Line>
          </Stack>
        </Group>
        <Group $w={191} $gap={3}>
          <Big w={50} icon={<CondIcon />} label={"Bedingte\nFormatierung"} />
          <Big w={42} icon={<TableIcon />} label={"Als Tabelle\nformatieren"} />
          <Big w={78} icon={<StyleIcon />} label="Zellenformatvorlagen" />
        </Group>
        <Group $w={119} $gap={1}>
          <Big w={34} icon={<InsertCells />} label="Einfügen" />
          <Big w={34} icon={<DeleteCells />} label="Löschen" />
          <Big w={34} icon={<FormatCells />} label="Format" />
        </Group>
        <Group $w={126} $pad={9} $gap={2}>
          <Stack $gap={4}>
            <IconButton aria-label="Summe" $gap={4}><Sigma /><Chevron /></IconButton>
            <IconButton aria-label="Ausfüllen" $gap={4}><FillDown /><Chevron /></IconButton>
            <IconButton aria-label="Löschen" $gap={4}><Eraser /><Chevron /></IconButton>
          </Stack>
          <Big w={38} icon={<SortFilter />} label={"Sortieren\nund filtern"} />
          <Big w={44} icon={<SearchBig />} label={"Suchen und\nauswählen"} />
        </Group>
        <Group $w={46} $pad={5}><Big solo w={35} icon={<AddIns />} label="Add-Ins" /></Group>
        <Group $w={70} $pad={7}><Big solo w={42} icon={<Analyze />} label={"Daten\nanalysieren"} /></Group>
      </Ribbon>

      <FormulaBar>
        <NameBox>
          <input aria-label="Namenfeld" defaultValue="D22" />
          <Svg w={5} h={13}><path d="M.5 4.500L2.500 1.500l2 3zM.5 8.500l2 3 2-3z" fill="#444" stroke="none" /></Svg>
        </NameBox>
        <FormulaTools>
          <IconButton aria-label="Abbrechen" $color="#aaa"><Svg w={9} h={9}><path d="M1 1l7 7M8 1L1 8" /></Svg></IconButton>
          <IconButton aria-label="Eingeben" $color="#aaa"><Svg w={10} h={9}><path d="M1 5l3 3 5-7" /></Svg></IconButton>
          <Fx>fx</Fx>
        </FormulaTools>
        <FormulaInput aria-label="Formel" />
        <Expand aria-label="Erweitern"><Chevron /></Expand>
      </FormulaBar>

      <Sheet>
        <Pane><Frozen /></Pane>
        <Body />
      </Sheet>

      <SheetTabs>
        <TabArrows>
          <IconButton aria-label="Zurück" $color="#aaa"><Svg w={6} h={8}><path d="M5 1v6L1 4z" fill="#aaa" /></Svg></IconButton>
          <IconButton aria-label="Weiter" $color="#aaa"><Svg w={6} h={8}><path d="M1 1v6l4-3z" fill="#aaa" /></Svg></IconButton>
        </TabArrows>
        <SheetTab $active $pad={20}>OR</SheetTab>
        <SheetTab $bg="#fbf94f" $pad={8}>CCvsBTN</SheetTab>
        <SheetTab $bg="#fbf94f" $pad={8}>CCvsSB</SheetTab>
        <SheetTab $bg="#fbf94f" $pad={8}>OverFoldOOPvsUTGMP</SheetTab>
        <SheetTab $bg="#fbf94f" $pad={8}>OverFoldFlopvsCOBTN</SheetTab>
        <SheetTab $bg="#e0281f" $bold $pad={7}>3BetBBvsSB</SheetTab>
        <SheetTab $bg="#e0281f" $bold $pad={7}>3BetBBvsBTN</SheetTab>
        <SheetTab $plain $pad={18}>4Bet</SheetTab>
        <SheetTab $plain $pad={9} aria-label="Neues Blatt"><Svg w={8} h={8} color="#444"><path d="M4 1v6M1 4h6" /></Svg></SheetTab>
      </SheetTabs>
      <StatusBar>
        <Svg w={10} h={6} sw={0.8} color="#555"><circle cx="5" cy="4" r="2" /><path d="M1 2v3M9 2v3" /></Svg>
        <ViewButtons>
          <ViewButton $on aria-label="Normal"><Svg w={10} h={5} color="#222"><path d="M1 1h8M1 4h8M3 1v3M6 1v3" /></Svg></ViewButton>
          <ViewButton aria-label="Seitenlayout"><Svg w={8} h={6} color="#666"><path d="M1 6V1h4l2 2" /></Svg></ViewButton>
          <ViewButton aria-label="Umbruchvorschau"><Svg w={10} h={6} color="#666"><path d="M2 1v5M8 1v5" /></Svg></ViewButton>
        </ViewButtons>
      </StatusBar>
    </Window>
  );
}
